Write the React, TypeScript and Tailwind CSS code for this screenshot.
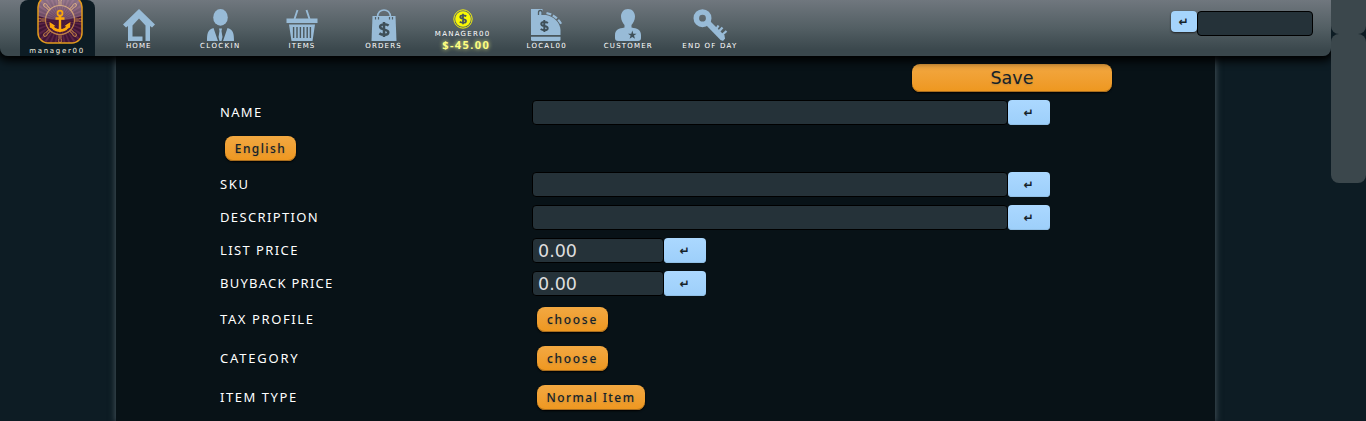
import React from "react";

const BLUE = "#98bbd7";

function Icon({ children }: { children: React.ReactNode }) {
  return (
    <svg width="36" height="33" viewBox="0 0 36 33" className="block" fill={BLUE}>
      {children}
    </svg>
  );
}

function HomeIcon() {
  return (
    <Icon>
      <path d="M18 0 L34 15.5 L31 18.5 L29 17 V32 H24.5 V16.5 L18 9.5 L11.5 16.5 V27.5 H21.5 V32 H7 V17 L5 18.5 L2 15.5 Z" />
    </Icon>
  );
}

function ClockInIcon() {
  return (
    <Icon>
      <ellipse cx="18.500" cy="8.400" rx="7.300" ry="8.400" />
      <path d="M11.500 19 L16 32 H5 C5 25 5.500 20.500 11.500 19Z M25.500 19 L21 32 H32 C32 25 31.500 20.500 25.500 19Z M17 19.500 H20 L19.500 22 L20.500 28 L19.500 32 H17.500 L16.500 28 L17.500 22Z" />
    </Icon>
  );
}

function BasketIcon() {
  return (
    <Icon>
      <path d="M2.500 9.500 H33.500 V14 H2.500Z M5 15.500 H31 L28.500 32 H7.500Z" />
      <path d="M10.500 10 L13.500 1 M25.500 10 L22.500 1" stroke={BLUE} strokeWidth="1.900" />
      <path d="M9.600 18 V29 M13 18 V29 M16.400 18 V29 M19.800 18 V29 M23.200 18 V29 M26.400 18 V29" stroke="#4b575c" strokeWidth="1.400" />
    </Icon>
  );
}

function Dollar({ x, y, scale, color }: { x: number; y: number; scale: number; color: string }) {
  return (
    <g transform={`translate(${x} ${y}) scale(${scale})`} fill="none" stroke={color} strokeWidth="2.300">
      <path d="M4.300 -3.600 C1.500 -5.600 -3.600 -5 -3.600 -2.500 C-3.600 1 4 -0.800 4 2.500 C4 5.500 -1.500 5.500 -4.300 3.600 M0 -7 V7" />
    </g>
  );
}

function BagIcon() {
  return (
    <Icon>
      <path d="M6.500 7 H29.500 L30.500 32 H5.500Z" />
      <path d="M11.500 10 V8 C11.500 -1.500 24.500 -1.500 24.500 8 V10" fill="none" stroke={BLUE} strokeWidth="1.500" />
      <path d="M9.500 8 V10.500 M12.500 8 V10.500 M23.500 8 V10.500 M26.500 8 V10.500" stroke="#536066" strokeWidth="1.200" />
      <Dollar x={18} y={20.500} scale={1.080} color="#3f5059" />
    </Icon>
  );
}

function RegisterIcon() {
  return (
    <Icon>
      <path d="M2 0 H13.500 V6 H17 C25 7.500 31.500 14 31.500 21 V26 H2Z" />
      <path d="M2 27.800 H31.500 V30.500 Q31.500 32 30 32 H3.500 Q2 32 2 30.500Z" />
      <path d="M9.500 6 V3.500 Q9.500 1.500 11.300 1.500 Q13.100 1.500 13.100 3.500 V6" fill="none" stroke="#4f5c62" strokeWidth="1.300" />
      <path d="M17.500 4 C24 5.500 29.500 9.500 32.500 15.500" fill="none" stroke={BLUE} strokeWidth="2.200" strokeDasharray="5 1.800" />
      <Dollar x={15.300} y={17} scale={0.850} color="#3f5059" />
    </Icon>
  );
}

function CustomerIcon() {
  return (
    <Icon>
      <path d="M18 0 C22.500 0 25 3.600 25 7.500 C25 11.500 23 14 21.500 16 V18.500 C27 19.500 31 20.500 31 26 V29 Q31 32 28 32 H8 Q5 32 5 29 V26 C5 20.500 9 19.500 14.500 18.500 V16 C13 14 11 11.500 11 7.500 C11 3.600 13.500 0 18 0Z" />
      <path d="M22.300 21.500 L23.300 24.700 H26.600 L24 26.600 L25 29.800 L22.300 27.900 L19.600 29.800 L20.600 26.600 L18 24.700 H21.300Z" fill="#3f5059" />
    </Icon>
  );
}

function KeyIcon() {
  return (
    <Icon>
      <circle cx="10.500" cy="9.200" r="6.200" fill="none" stroke={BLUE} strokeWidth="5.600" />
      <path d="M14 16 L18 12 L28.500 22.500 L32.500 26.500 L33 29.500 L31 32 L28.500 31Z" />
      <path d="M23.500 21.500 L26.500 16.500 M26 23.500 L30.500 18.500 M29.500 26.500 L34.500 22" stroke={BLUE} strokeWidth="2.300" />
    </Icon>
  );
}

function CoinIcon() {
  return (
    <svg width="20" height="20" viewBox="0 0 20 20" className="block">
      <circle cx="10" cy="10" r="9.200" fill="none" stroke="#f2f20c" strokeWidth="1" />
      <circle cx="10" cy="10" r="7.800" fill="#f8f806" />
      <Dollar x={10} y={10} scale={0.760} color="#46545a" />
    </svg>
  );
}

function HelmLogo() {
  const angles = [0, 45, 90, 135, 180, 225, 270, 315];
  const rays = Array.from({ length: 32 }, (_, i) => i * 11.25);
  return (
    <svg width="46" height="45" viewBox="0 0 46 45" className="block">
      <defs>
        <clipPath id="logo-clip">
          <rect x="1" y="-3" width="44" height="46" rx="10" />
        </clipPath>
        <linearGradient id="logo-shine" x1="0" y1="0" x2="0" y2="1">
          <stop offset="0" stopColor="#fff" stopOpacity=".42" />
          <stop offset="1" stopColor="#fff" stopOpacity=".2" />
        </linearGradient>
      </defs>
      <g clipPath="url(#logo-clip)">
        <rect y="-3" width="46" height="48" fill="#3f1435" />
        {rays.map((a) => (
          <path key={a} d="M23 20 L21.500 -14 H24.500Z" fill="#5a2446" transform={`rotate(${a} 23 20)`} />
        ))}
        <g fill="none" stroke="#bd7c45" strokeWidth="1">
          <circle cx="23" cy="20" r="14.500" strokeWidth="1.200" />
          {angles.map((a) => (
            <path key={a} d="M22 6 V1.500 Q20.800 -0.500 22 -2.500 H24 Q25.200 -0.500 24 1.500 V6" transform={`rotate(${a} 23 20)`} />
          ))}
        </g>
        <path d="M0 -3 H46 V15 Q23 25 0 15Z" fill="url(#logo-shine)" />
      </g>
      <rect x="1" y="-3" width="44" height="46" rx="10" fill="none" stroke="#e29a1e" strokeWidth="1.500" />
      <g fill="none" stroke="#fba70b">
        <circle cx="23" cy="13.200" r="2.500" strokeWidth="1.700" />
        <path d="M23 16 V30 M18.500 18.500 H27.500" strokeWidth="2.400" />
        <path d="M14.500 24.500 C15.500 32.500 30.500 32.500 31.500 24.500" strokeWidth="2.800" />
      </g>
      <path d="M12.500 22 L18.500 26 L13 28Z M33.500 22 L27.500 26 L33 28Z M20 30 H26 L23 32.500Z" fill="#fba70b" />
    </svg>
  );
}

const returnKey = "flex items-center justify-center rounded-[4px] pr-px font-['DejaVu_Sans',sans-serif] text-[12px] leading-none font-bold text-[#152229] ";

const navItems = [
  { label: "HOME", icon: <HomeIcon />, spacing: "tracking-[1.1px]" },
  { label: "CLOCKIN", icon: <ClockInIcon />, spacing: "tracking-[1.4px]" },
  { label: "ITEMS", icon: <BasketIcon />, spacing: "tracking-[1.1px]" },
  { label: "ORDERS", icon: <BagIcon />, spacing: "tracking-[1.2px]" },
  { label: "MANAGER00", balance: "$-45.00", icon: <CoinIcon />, spacing: "tracking-[1.25px]" },
  { label: "LOCAL00", icon: <RegisterIcon />, spacing: "tracking-[1.25px]" },
  { label: "CUSTOMER", icon: <CustomerIcon />, spacing: "tracking-[1.2px]" },
  { label: "END OF DAY", icon: <KeyIcon />, spacing: "tracking-[1.25px]" },
];

const navText = "font-['DejaVu_Sans',sans-serif] text-[7px] leading-[9px] whitespace-nowrap text-white ";

function Header() {
  return (
    <header className="relative z-10 flex h-14 w-full rounded-b-lg bg-linear-to-b from-[#70777e] via-[#535f64] via-50% to-[#3a474c] to-90% shadow-[0_2px_8px_3px_#000]">
      <div className="ml-5 flex h-14 w-[75px] flex-col items-center rounded-t-lg bg-[#0d1c24]">
        <div className="ml-1 h-[46px]">
          <HelmLogo />
        </div>
        <span className="-ml-px pt-px font-['DejaVu_Sans',sans-serif] text-[7px] leading-[9px] tracking-[1.7px] whitespace-nowrap text-[#f5f3e1]">manager00</span>
      </div>
      <nav className="ml-[3px] flex">
        {navItems.map((item) => (
          <a key={item.label} className="flex w-[81.6px] flex-col items-center pt-[9px]">
            {item.balance ? (
              <div className="flex flex-col items-center pr-[5px]">
                <div className="h-[21px]">{item.icon}</div>
                <span className={navText + item.spacing}>{item.label}</span>
                <span className="ml-[7px] text-[11px] leading-[12px] font-bold tracking-[1.4px] text-[#ffff80] [text-shadow:0_0_4px_#e9f08b]">
                  {item.balance}
                </span>
              </div>
            ) : (
              <>
                <div className="h-[33px]">{item.icon}</div>
                <span className={navText + item.spacing}>{item.label}</span>
              </>
            )}
          </a>
        ))}
      </nav>
      <div className="ml-auto flex pt-[11px] pr-[18px]">
        <button className={returnKey + "h-[21px] w-[26px] bg-[#a5d4fc] shadow-[0_1px_2px_#222]"}>↵</button>
        <input className="h-[25px] w-[116px] rounded-[4px] border border-black bg-[#253239]" />
      </div>
    </header>
  );
}

function Field({ label, spacing, value = "", wide = false }: { label: string; spacing: string; value?: string; wide?: boolean }) {
  return (
    <div className="flex h-[33px] items-center">
      <label className={"w-[312px] pb-[2px] text-[13px] leading-5 text-white " + spacing}>{label}</label>
      <input
        defaultValue={value}
        className={
          "h-[25px] rounded-[4px] border border-black bg-[#253239] px-[5px] pt-[2px] font-['DejaVu_Sans',sans-serif] text-[17.5px] text-[#dedede] " +
          (wide ? "w-[476px]" : "w-[132px]")
        }
      />
      <button className={returnKey + "h-[25px] w-[42px] bg-linear-to-b from-[#abd8ff] to-[#9dcffa] shadow-[inset_0_-1px_0_#91bfe5]"}>↵</button>
    </div>
  );
}

const orange =
  "flex items-center justify-center bg-linear-to-b from-[#f2a841] to-[#ee971e] text-[#152229] shadow-[inset_0_-1px_0_#a86d1e,0_1px_2px_#000] [text-shadow:0_1px_2px_#c08a38] ";

function Choice({ label, spacing, value, wide = false }: { label: string; spacing: string; value: string; wide?: boolean }) {
  return (
    <div className="flex h-[39px] items-center">
      <label className={"w-[317px] pb-[2px] text-[13px] leading-5 text-white " + spacing}>{label}</label>
      <button className={orange + "h-[25px] rounded-lg text-[12px] font-medium whitespace-nowrap " + (wide ? "w-[108px] tracking-[1.4px]" : "w-[71px] tracking-[1.7px]")}>
        {value}
      </button>
    </div>
  );
}

export default function App() {
  return (
    <div className="flex h-[421px] w-[1366px] overflow-hidden bg-[#0d1c24] font-['Noto_Sans',sans-serif]">
      <div className="flex w-[1331px] flex-col">
        <Header />
        <main className="ml-[116px] h-[365px] w-[1099px] bg-[#081217] pl-[104px] shadow-[0_0_6px_1px_#435058]">
          <div className="flex h-10 w-[892px] justify-end pt-2">
            <button className={orange + "h-7 w-[200px] rounded-lg font-['DejaVu_Sans',sans-serif] text-[17.5px]"}>Save</button>
          </div>
          <Field label="NAME" spacing="tracking-[1.3px]" wide />
          <div className="flex h-[39px] items-center pl-[5px]">
            <button className={orange + "h-[25px] w-[71px] rounded-lg text-[12px] font-medium tracking-[1.4px]"}>English</button>
          </div>
          <Field label="SKU" spacing="tracking-[1.6px]" wide />
          <Field label="DESCRIPTION" spacing="tracking-[1.35px]" wide />
          <Field label="LIST PRICE" spacing="tracking-[1.4px]" value="0.00" />
          <Field label="BUYBACK PRICE" spacing="tracking-[1.25px]" value="0.00" />
          <Choice label="TAX PROFILE" spacing="tracking-[1.6px]" value="choose" />
          <Choice label="CATEGORY" spacing="tracking-[1.8px]" value="choose" />
          <Choice label="ITEM TYPE" spacing="tracking-[1.55px]" value="Normal Item" wide />
        </main>
      </div>
      <aside className="relative z-20 w-[35px] bg-[#0d1c24]">
        <div className="h-[34px] rounded-b-lg bg-[#3b474c]" />
        <div className="h-[149px] rounded-lg bg-[#3b474c]" />
      </aside>
    </div>
  );
}
